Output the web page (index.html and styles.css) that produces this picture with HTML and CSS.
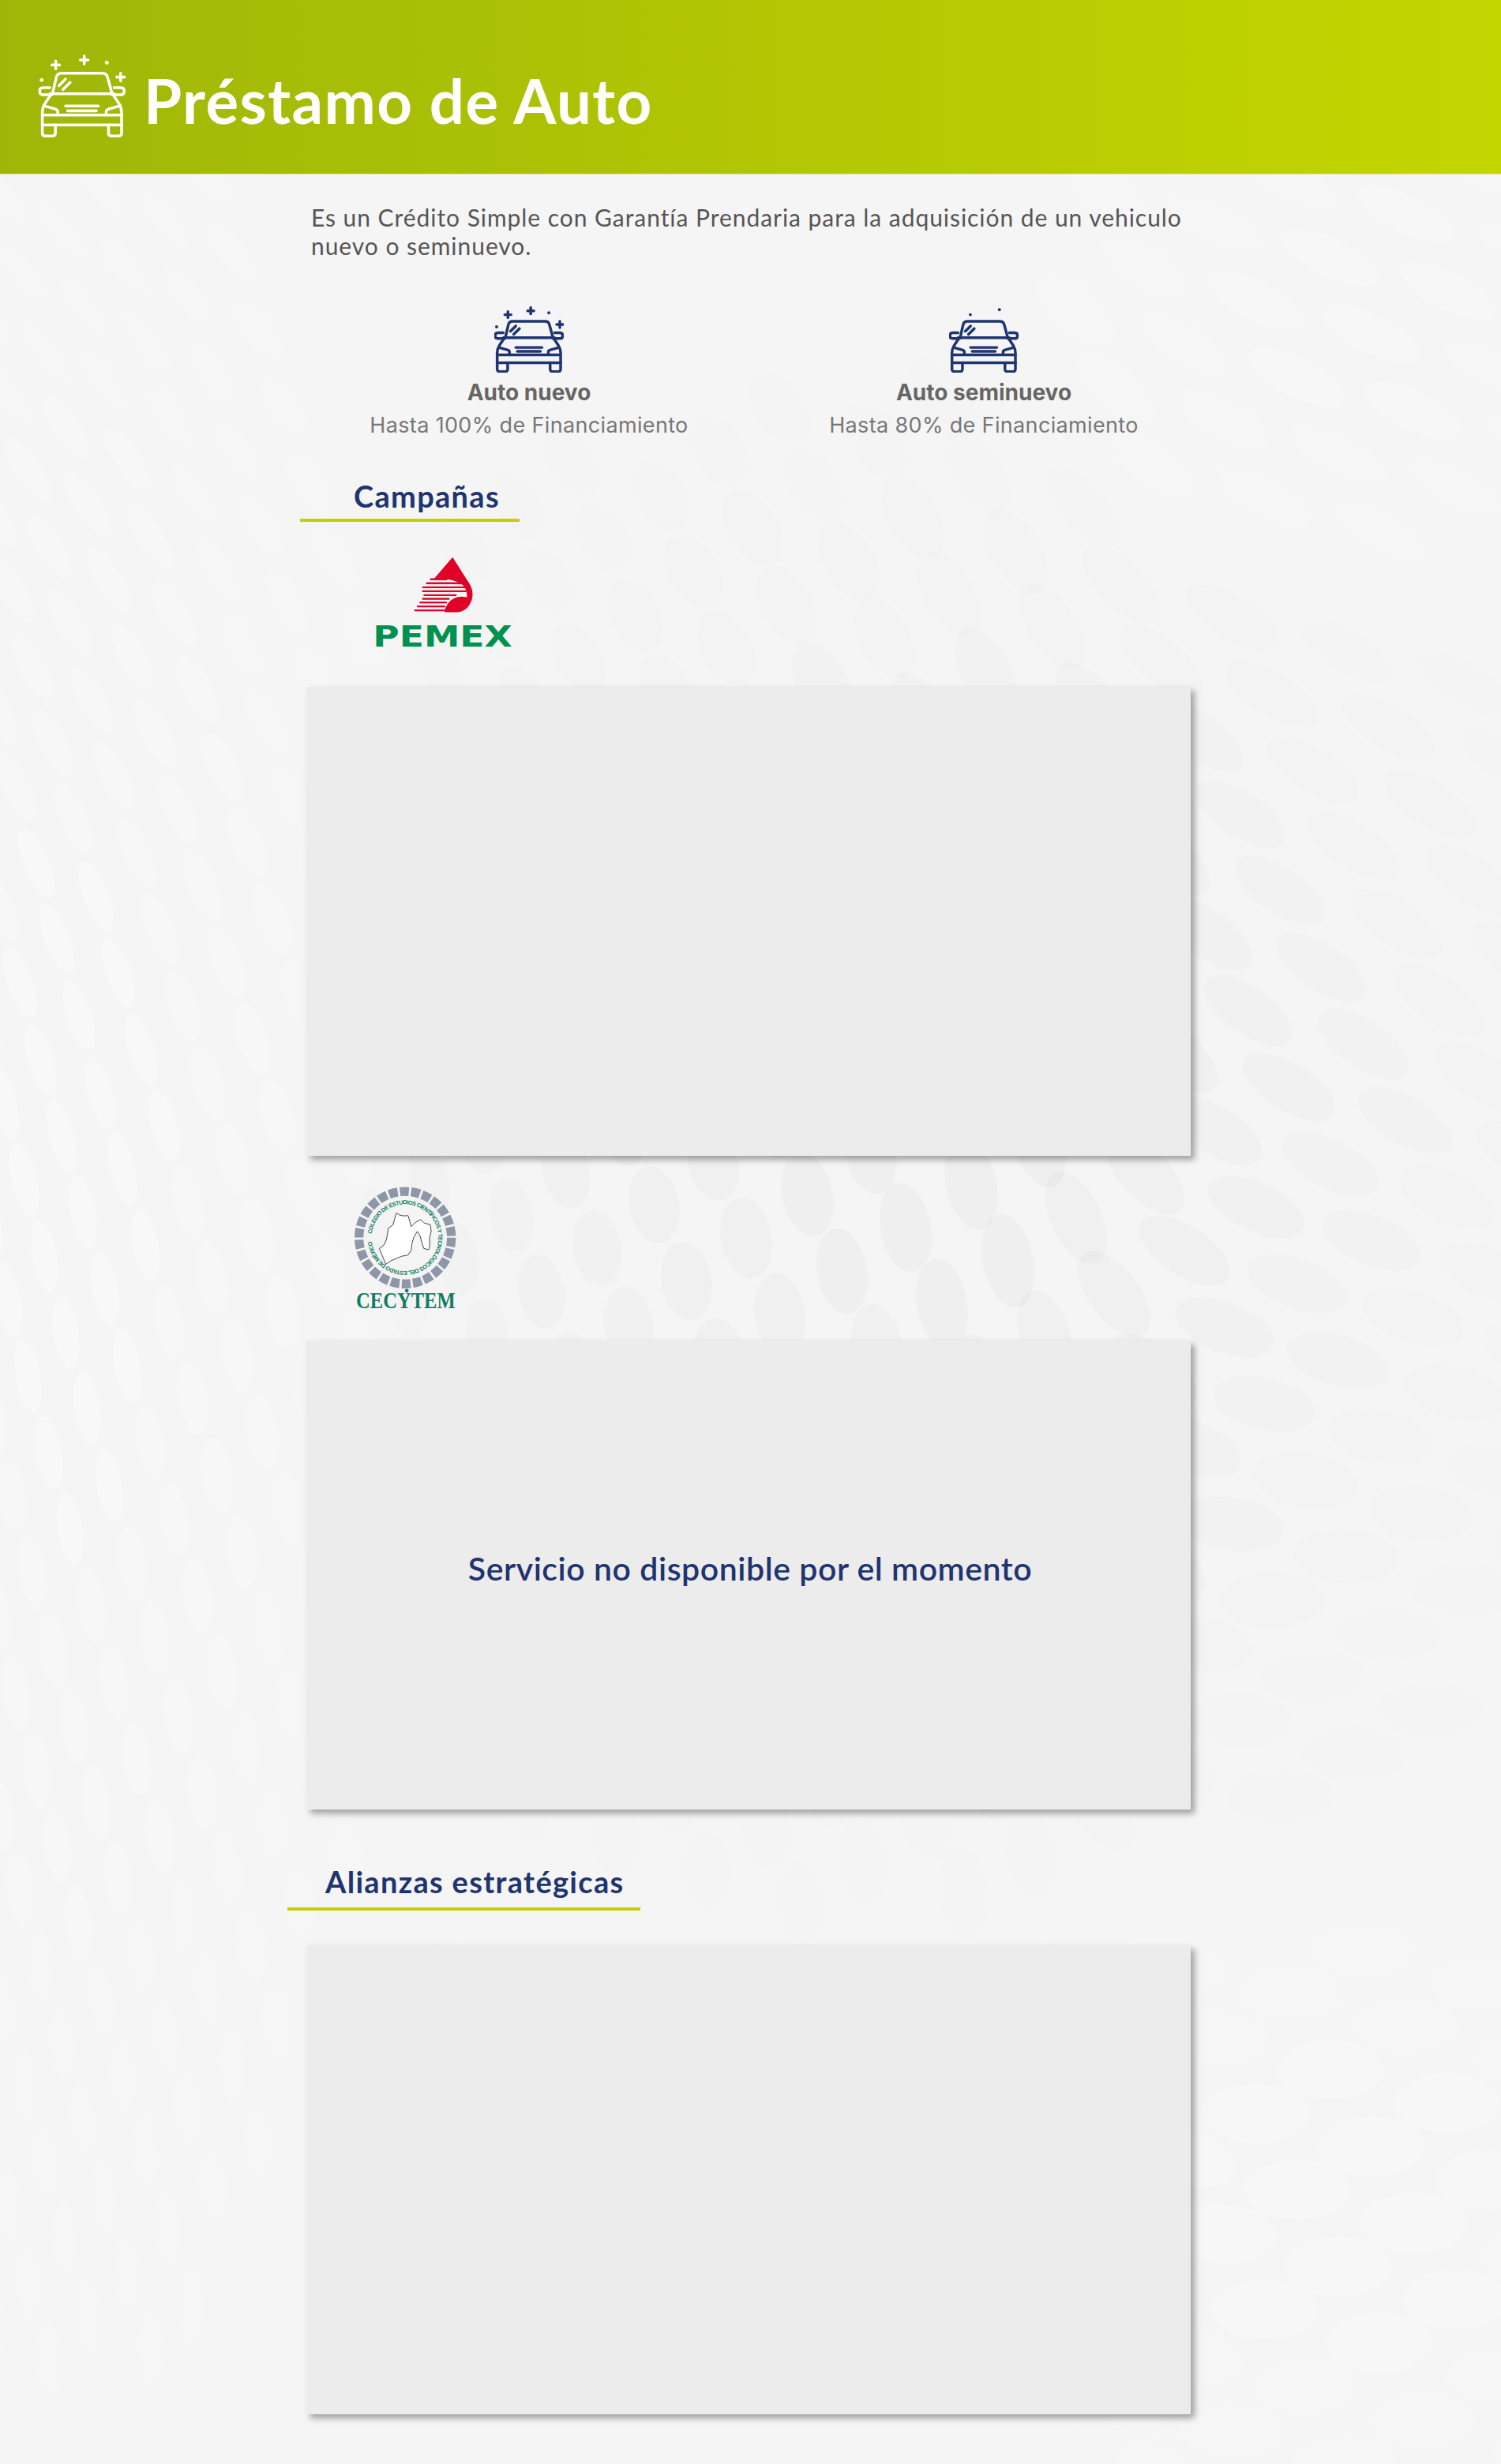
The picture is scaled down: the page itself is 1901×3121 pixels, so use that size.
FILE: index.html
```html
<!DOCTYPE html>
<html lang="es">
<head>
<meta charset="utf-8">
<title>Préstamo de Auto</title>
<link rel="stylesheet" href="styles.css">
</head>
<body>
<svg class="backdrop" id="backdrop" viewBox="0 0 1901 3121" aria-hidden="true"></svg>
<svg class="sprites" aria-hidden="true">
  <defs>
    <symbol id="car" viewBox="738 55 265 253" overflow="visible">
      <path d="M780 175L792 124Q795 112 808 112H932Q945 112 948 124L962 175"/>
      <path d="M772 175H968"/>
      <path d="M778 178H752Q741 178 741 167Q741 156 752 156H772"/>
      <path d="M962 178H988Q999 178 999 167Q999 156 988 156H968"/>
      <path d="M775 178L757 205Q749 218 749 232V270"/>
      <path d="M965 178L983 205Q991 218 991 232V270"/>
      <path d="M749 240H991M749 270H991"/>
      <path d="M749 270V295Q749 304 758 304H780Q789 304 789 295V270"/>
      <path d="M951 270V295Q951 304 960 304H982Q991 304 991 295V270"/>
      <path d="M755 212L790 222Q796 224 796 230V238"/>
      <path d="M985 212L950 222Q944 224 944 230V238"/>
      <path d="M820 212H920M826 227H914"/>
      <path d="M800 150L820 130M812 162L834 140"/>
    </symbol>
    <symbol id="sparkles" viewBox="738 55 265 253" overflow="visible">
      <path d="M778 87H802M790 75V99M865 72H889M877 60V84M976 124H1000M988 112V136"/>
      <path class="dot" d="M946 80h.01M747 133h.01"/>
    </symbol>
    <symbol id="dots" viewBox="738 55 265 253" overflow="visible">
      <path class="dot" d="M819 87h.01M930 68h.01"/>
    </symbol>
  </defs>
</svg>

<header class="hero">
  <svg class="hero-icon"><use href="#car"/><use href="#sparkles"/></svg>
  <h1 class="hero-title">Préstamo de Auto</h1>
</header>

<main class="content">
  <p class="intro">Es un Crédito Simple con Garantía Prendaria para la adquisición de un vehiculo<br>nuevo o seminuevo.</p>

  <div class="options">
    <div class="option">
      <svg class="option-icon"><use href="#car"/><use href="#sparkles"/></svg>
      <h3 class="option-title">Auto nuevo</h3>
      <p class="option-text">Hasta 100% de Financiamiento</p>
    </div>
    <div class="option">
      <svg class="option-icon"><use href="#car"/><use href="#dots"/></svg>
      <h3 class="option-title">Auto seminuevo</h3>
      <p class="option-text">Hasta 80% de Financiamiento</p>
    </div>
  </div>

  <h2 class="section-title section-campaigns">Campañas</h2>

  <div class="logo-row logo-row-pemex">
    <svg class="logo-pemex" viewBox="340 340 530 350" role="img" aria-label="Pemex">
      <path class="pemex-red" d="M640 348L568 432Q640 425 680 455Q695 470 695 500Q650 490 625 520Q610 540 610 557H655Q700 555 714 505Q722 470 695 435Z"/>
      <path class="pemex-lines" d="M555 432H620M540 447H680M525 462H690M525 477H692M530 492H655M525 506H628M515 520H618M505 535H612M495 550H612"/>
      <text class="pemex-word" x="338" y="686" textLength="528" lengthAdjust="spacingAndGlyphs">PEMEX</text>
    </svg>
  </div>
  <div class="card"></div>

  <div class="logo-row logo-row-cecytem">
    <svg class="logo-cecytem" viewBox="140 70 400 480" role="img" aria-label="CECyTEM">
      <defs><path id="ring-text" d="M212 250A127 127 0 1 1 211.5 272"/></defs>
      <circle class="cecytem-ring" cx="339" cy="264" r="176"/>
      <text class="cecytem-small"><textPath href="#ring-text" textLength="770" lengthAdjust="spacing">COLEGIO DE ESTUDIOS CIENTÍFICOS Y TECNOLÓGICOS DEL ESTADO DE MÉXICO</textPath></text>
      <path class="cecytem-map" d="M305 170L318 178 333 181 350 180 356 200 362 222 378 206 398 195 412 208 435 215 438 240 432 265 433 295 428 310 410 305 403 285 396 258 385 240 372 262 365 285 362 312 350 330 325 335 308 342 285 352 265 365 255 340 240 305 258 292 268 270 275 228 293 215 298 195Z"/>
      <text class="cecytem-word" x="152" y="532" textLength="378" lengthAdjust="spacingAndGlyphs">CECYTEM</text>
      <circle class="cecytem-dot" cx="345" cy="466" r="7"/>
    </svg>
  </div>
  <div class="card card-message"><p class="card-text">Servicio no disponible por el momento</p></div>

  <h2 class="section-title section-alliances">Alianzas estratégicas</h2>
  <div class="card"></div>
</main>
<script src="backdrop.js"></script>
</body>
</html>
```
FILE: styles.css
```css
* { box-sizing: border-box; }
html, body { margin: 0; padding: 0; }
body {
  position: relative;
  width: 1901px;
  height: 3121px;
  overflow: hidden;
  background: #f5f5f5;
  font-family: "Lato", "Liberation Sans", sans-serif;
}
.backdrop { position: absolute; inset: 0; width: 1901px; height: 3121px; z-index: 0; }
.sprites { position: absolute; width: 0; height: 0; }

.hero, .content { position: relative; z-index: 1; }
.hero {
  display: flex;
  align-items: center;
  height: 221px;
  padding-left: 48px;
  background: linear-gradient(90deg, #9fb608 0%, #c4d600 100%);
  border-bottom: 1px solid #dfe79c;
}
.hero-icon {
  width: 112px;
  height: 105px;
  margin-top: 23px;
  color: #fff;
  fill: none;
  stroke: currentColor;
  stroke-width: 8.5;
  stroke-linecap: round;
  stroke-linejoin: round;
}
.hero-title {
  margin: 34px 0 0 22px;
  color: #fff;
  font-size: 78px;
  font-weight: 700;
  line-height: 90px;
  letter-spacing: 1.4px;
}

.content { padding-left: 364px; }
.intro {
  margin: 36px 0 0 30px;
  color: #555;
  font-size: 30px;
  line-height: 36px;
  letter-spacing: 0.95px;
}
.options {
  display: grid;
  grid-template-columns: 576px 576px;
  margin: 59px 0 0 18px;
}
.option { display: flex; flex-direction: column; align-items: center; text-align: center; }
.option-icon {
  width: 88px;
  height: 84px;
  color: #1f3470;
  fill: none;
  stroke: currentColor;
  stroke-width: 10.5;
  stroke-linecap: round;
  stroke-linejoin: round;
}
.dot { stroke-width: 12; }
.option-title {
  margin: 8px 0 0;
  color: #666;
  font-family: "Inter", sans-serif;
  font-size: 28px;
  font-weight: 700;
  line-height: 34px;
}
.option-text {
  margin: 8px 0 0;
  color: #777;
  font-family: "Inter", sans-serif;
  font-size: 27px;
  font-weight: 400;
  line-height: 34px;
  letter-spacing: 0.35px;
}

.section-title {
  margin: 0;
  border-bottom: 4px solid #c4d000;
  color: #1f3470;
  font-size: 38px;
  font-weight: 700;
  line-height: 44px;
  letter-spacing: 1.3px;
}
.section-campaigns { width: 278px; margin: 50px 0 0 16px; padding-left: 68px; padding-bottom: 7px; }
.section-alliances { width: 447px; margin-top: 69px; padding-left: 48px; padding-bottom: 11px; }

.logo-row { margin-left: 24px; }
.logo-row-pemex { height: 209px; padding: 42px 0 0 85px; }
.logo-row-cecytem { height: 234px; padding: 39px 0 0 59px; }
.logo-pemex { display: block; width: 177px; height: 117px; overflow: visible; }
.logo-cecytem { display: block; width: 133px; height: 160px; overflow: visible; }
.pemex-red { fill: #e10028; }
.pemex-lines { fill: none; stroke: #e10028; stroke-width: 7; }
.pemex-word { fill: #00914f; font-family: "DejaVu Sans", sans-serif; font-size: 114px; font-weight: 700; }
.cecytem-ring { fill: none; stroke: #8e97a7; stroke-width: 34; stroke-dasharray: 34 8.53; }
.cecytem-small { fill: #0c7d63; font-family: "Liberation Sans", sans-serif; font-size: 22px; font-weight: 700; }
.cecytem-map { fill: #fff; stroke: #222; stroke-width: 2.5; }
.cecytem-word { fill: #0f7d63; font-family: "Liberation Serif", serif; font-size: 86px; font-weight: 700; }
.cecytem-dot { fill: #0f7d63; }

.card {
  width: 1120px;
  height: 594px;
  margin-left: 24px;
  background: #ececec;
  box-shadow: 5px 5px 8px rgba(0, 0, 0, 0.35);
}
.section-alliances + .card { margin-top: 44px; }
.card-message {
  display: flex;
  align-items: center;
  justify-content: center;
  padding-bottom: 16px;
}
.card-text {
  margin: 0 0 0 4px;
  color: #1f3470;
  font-size: 41px;
  font-weight: 600;
  line-height: 50px;
  letter-spacing: 0.55px;
}
```
FILE: backdrop.js
```js
// Decorative fan of soft ellipses behind the page.
(function () {
  var svg = document.getElementById('backdrop');
  var NS = 'http://www.w3.org/2000/svg';

  function lerpTable(t, v) {
    if (v <= t[0][0]) return t[0][1];
    for (var i = 1; i < t.length; i++) {
      if (v <= t[i][0]) {
        var k = (v - t[i - 1][0]) / (t[i][0] - t[i - 1][0]);
        return t[i - 1][1] + (t[i][1] - t[i - 1][1]) * k;
      }
    }
    return t[t.length - 1][1];
  }
  function smooth(a, b, v) {
    var k = Math.min(1, Math.max(0, (v - a) / (b - a)));
    return k * k * (3 - 2 * k);
  }
  function blob(x, y, cx, cy, sx, sy) {
    var dx = (x - cx) / sx, dy = (y - cy) / sy;
    return Math.exp(-(dx * dx + dy * dy) / 2);
  }

  var leftAngle = [[300, 50], [1000, 65], [1600, 80], [3100, 88]];
  var rightAngle = [[300, 25], [1300, 35], [2050, 0], [3100, 0]];
  var rightThick = [[400, 24], [1300, 30], [2700, 38]];

  for (var i = -60; i < 90; i++) {
    for (var j = -60; j < 90; j++) {
      var u = i * 70 + j * 45;
      var y = i * 42 - j * 55;
      if (u < -20 || y < 200 || y > 3200) continue;
      var x = u + 0.0005 * u * u;
      if (x > 2000) continue;

      var light = 0.30 * blob(x, y, 90, 1500, 280, 1000) +
                  0.22 * blob(x, y, 1700, 400, 280, 240) +
                  0.24 * blob(x, y, 1750, 2800, 400, 280);
      var dark = 0.024 * blob(x, y, 1150, 1450, 480, 480);
      var fill, alpha;
      if (dark * 14 > light) { fill = '#000'; alpha = dark; }
      else { fill = '#fff'; alpha = light; }
      if ((fill === '#000' && alpha < 0.003) || (fill === '#fff' && alpha < 0.04)) continue;

      var s = smooth(1250, 1600, x);
      var la = lerpTable(leftAngle, y), ra = lerpTable(rightAngle, y);
      var angle = la + (ra - la) * s;
      var a = 47 + 20 * smooth(600, 1700, x);
      var b1 = 16 + 16 * smooth(100, 900, x);
      var b = b1 + (lerpTable(rightThick, y) - b1) * smooth(1200, 1700, x);

      var e = document.createElementNS(NS, 'ellipse');
      e.setAttribute('rx', a.toFixed(1));
      e.setAttribute('ry', b.toFixed(1));
      e.setAttribute('transform', 'translate(' + x.toFixed(1) + ' ' + y.toFixed(1) + ') rotate(' + angle.toFixed(1) + ')');
      e.setAttribute('fill', fill);
      e.setAttribute('fill-opacity', alpha.toFixed(4));
      svg.appendChild(e);
    }
  }
})();
```
